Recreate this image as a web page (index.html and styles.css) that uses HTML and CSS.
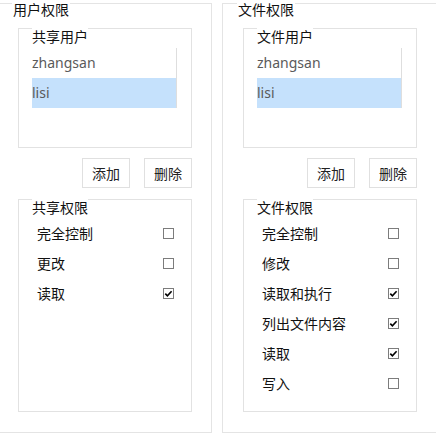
FILE: index.html
```html
<!DOCTYPE html>
<html lang="zh">
<head>
<meta charset="utf-8">
<link rel="stylesheet" href="styles.css">
</head>
<body>
<div class="wrap">
  <section class="panel">
    <div class="panel-title">用户权限</div>
    <div class="group users">
      <div class="legend">共享用户</div>
      <ul class="list">
        <li class="item">zhangsan</li>
        <li class="item selected">lisi</li>
      </ul>
    </div>
    <div class="actions">
      <button class="btn">添加</button>
      <button class="btn">删除</button>
    </div>
    <div class="group perms">
      <div class="legend">共享权限</div>
      <div class="rows">
        <label class="row"><span>完全控制</span><span class="cb"></span></label>
        <label class="row"><span>更改</span><span class="cb"></span></label>
        <label class="row"><span>读取</span><span class="cb checked"><svg viewBox="0 0 11 11" width="11" height="11"><path d="M2.3 5.6 L4.4 7.8 L8.6 3.2" fill="none" stroke="#000" stroke-width="1.6"/></svg></span></label>
      </div>
    </div>
  </section>
  <section class="panel">
    <div class="panel-title">文件权限</div>
    <div class="group users">
      <div class="legend">文件用户</div>
      <ul class="list">
        <li class="item">zhangsan</li>
        <li class="item selected">lisi</li>
      </ul>
    </div>
    <div class="actions">
      <button class="btn">添加</button>
      <button class="btn">删除</button>
    </div>
    <div class="group perms">
      <div class="legend">文件权限</div>
      <div class="rows">
        <label class="row"><span>完全控制</span><span class="cb"></span></label>
        <label class="row"><span>修改</span><span class="cb"></span></label>
        <label class="row"><span>读取和执行</span><span class="cb checked"><svg viewBox="0 0 11 11" width="11" height="11"><path d="M2.3 5.6 L4.4 7.8 L8.6 3.2" fill="none" stroke="#000" stroke-width="1.6"/></svg></span></label>
        <label class="row"><span>列出文件内容</span><span class="cb checked"><svg viewBox="0 0 11 11" width="11" height="11"><path d="M2.3 5.6 L4.4 7.8 L8.6 3.2" fill="none" stroke="#000" stroke-width="1.6"/></svg></span></label>
        <label class="row"><span>读取</span><span class="cb checked"><svg viewBox="0 0 11 11" width="11" height="11"><path d="M2.3 5.6 L4.4 7.8 L8.6 3.2" fill="none" stroke="#000" stroke-width="1.6"/></svg></span></label>
        <label class="row"><span>写入</span><span class="cb"></span></label>
      </div>
    </div>
  </section>
</div>
</body>
</html>
```

FILE: styles.css
```css
html, body {
  margin: 0;
  padding: 0;
  background: #fff;
  overflow: hidden;
}
body {
  font-family: "Noto Sans CJK SC", "Noto Sans", sans-serif;
  font-size: 14px;
  color: #1a1a1a;
}
.wrap {
  display: flex;
  gap: 10px;
  margin-left: -3px;
  padding-top: 3px;
  width: 460px;
}
.panel {
  flex: 0 0 auto;
  width: 215px;
  height: 430px;
  box-sizing: border-box;
  border: 1px solid #e4e4e4;
  padding: 0 19px 19px 20px;
  display: flex;
  flex-direction: column;
  align-items: stretch;
}
.panel-title {
  align-self: flex-start;
  line-height: 20px;
  height: 20px;
  margin: -5px 0 0 -6px;
  padding: 0 1px;
  background: #fff;
  color: #111;
}
.group {
  border: 1px solid #e2e2e2;
  box-sizing: border-box;
  display: flex;
  flex-direction: column;
}
.legend {
  align-self: flex-start;
  line-height: 20px;
  height: 20px;
  margin-top: -3px;
  background: #fff;
  color: #111;
}
.users {
  margin-top: 9px;
  height: 120px;
  padding: 0 14px 0 13px;
}
.list {
  list-style: none;
  margin: 2px 0 0 0;
  padding: 0;
  border-right: 1px solid #dedede;
}
.item {
  height: 30px;
  line-height: 30px;
  color: #5a5a5a;
  font-family: "Noto Sans", sans-serif;
  font-size: 14px;
}
.item.selected {
  background: #c5e1fc;
}
.actions {
  display: flex;
  justify-content: flex-end;
  gap: 14px;
  margin-top: 10px;
}
.btn {
  width: 48px;
  height: 30px;
  box-sizing: border-box;
  border: 1px solid #e0e0e0;
  background: #fff;
  font-family: "Noto Sans CJK SC", sans-serif;
  font-size: 14px;
  color: #222;
  padding: 0;
  line-height: 28px;
}
.perms {
  margin-top: 11px;
  height: 213px;
  padding: 0 17px 0 18px;
}
.perms .legend {
  margin-left: -5px;
}
.rows {
  display: flex;
  flex-direction: column;
  padding-top: 1px;
}
.row {
  height: 30px;
  display: flex;
  align-items: center;
  justify-content: space-between;
  color: #111;
}
.cb {
  width: 11px;
  height: 11px;
  box-sizing: border-box;
  border: 1px solid #7c7c7c;
  background: #fff;
  position: relative;
  display: block;
}
.cb svg {
  display: block;
  margin: -1px;
}
```
